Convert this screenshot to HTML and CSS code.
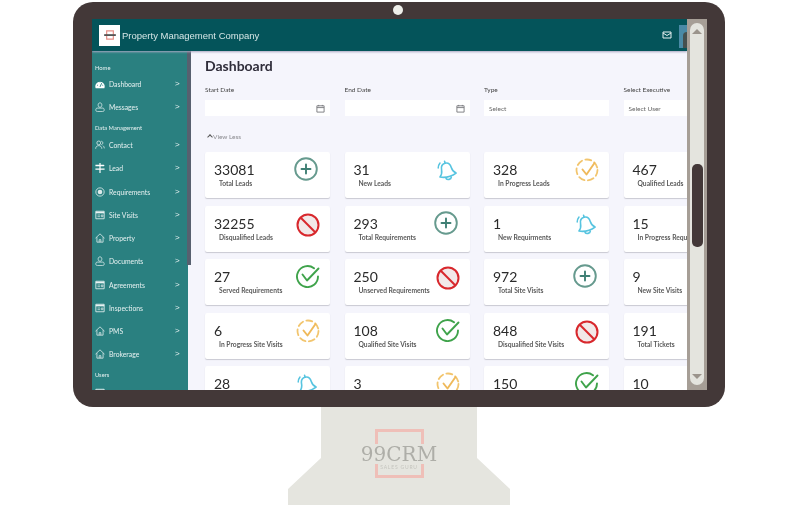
FILE: index.html
```html
<!DOCTYPE html>
<html lang="en">
<head>
  <meta charset="UTF-8" />
  <title>Property Management Dashboard</title>
  <link rel="stylesheet" href="styles.css">
</head>
<body>

  <!-- Icon sprites -->
  <svg class="sprites" width="0" height="0">
    <symbol id="i-plus" viewBox="0 0 24 24">
      <circle cx="12" cy="12" r="10.8" fill="none" stroke="#669a8e" stroke-width="1.9"/>
      <path d="M12 7.500v9M7.500 12h9" stroke="#3f7f74" stroke-width="1.9" stroke-linecap="round"/>
    </symbol>
    <symbol id="i-bell" viewBox="0 0 24 24">
      <g transform="rotate(-14 12 12)" fill="none" stroke="#57c4e0" stroke-width="1.600" stroke-linecap="round" stroke-linejoin="round">
        <path d="M12 4c3.300 0 4.800 2.600 5 5.600.2 3 1.300 5 3.300 6.600-4.800 2-11.800 2-16.600 0 2-1.600 3.100-3.600 3.300-6.600.2-3 1.700-5.600 5-5.600z"/>
        <path d="M9.300 19c.8 2.200 4.600 2.200 5.400 0M12 2v2"/>
      </g>
      <path d="M5 4C3.800 5.500 3.200 7 3.200 9" fill="none" stroke="#57c4e0" stroke-width="1.500" stroke-linecap="round"/>
    </symbol>
    <symbol id="i-prog" viewBox="0 0 24 24">
      <circle cx="12" cy="12" r="10.500" fill="none" stroke="#f2c56e" stroke-width="1.800" stroke-dasharray="6 3.500" stroke-linecap="round"/>
      <path d="M7.500 11.500l4 5 8-11.500" fill="none" stroke="#efb95a" stroke-width="1.900" stroke-linecap="round" stroke-linejoin="round"/>
    </symbol>
    <symbol id="i-check" viewBox="0 0 24 24">
      <path d="M18 4.300a10.500 10.500 0 1 0 4 8.200" fill="none" stroke="#3fa34b" stroke-width="1.900" stroke-linecap="round"/>
      <path d="M6.500 10.500l4.500 6L22.500 4.500" fill="none" stroke="#3fa34b" stroke-width="1.900" stroke-linecap="round" stroke-linejoin="round"/>
    </symbol>
    <symbol id="i-ban" viewBox="0 0 24 24">
      <circle cx="12" cy="12" r="10.500" fill="#f2e9e9" stroke="#d8282d" stroke-width="2"/>
      <path d="M4.800 4.800l14.400 14.400" stroke="#d8282d" stroke-width="2"/>
    </symbol>
    <symbol id="i-cal" viewBox="0 0 10 10">
      <path d="M1 2h8v7H1zM1 4h8M3 1v1.500M7 1v1.500" fill="none" stroke="#77787c" stroke-width="1"/>
    </symbol>
    <symbol id="i-gauge" viewBox="0 0 12 12">
      <path d="M.8 11a5.600 5.600 0 1 1 10.400 0z" fill="#fff"/>
      <path d="M6 9.500l2-4.500M2.500 7.500h1M8.800 7.500h1M6 3v1" stroke="#2a8080" stroke-width="1.100"/>
    </symbol>
    <symbol id="i-user" viewBox="0 0 12 12">
      <path d="M3.800 3.300c0-3 4.400-3 4.400 0v.7c0 3-4.400 3-4.400 0z" fill="none" stroke="#e8f2f2" stroke-width=".9"/>
      <path d="M3 7.300h6c1.300 0 2 .7 2 1.900v.3c0 1.300-.7 2-2 2H3c-1.300 0-2-.7-2-2v-.3c0-1.200.7-1.900 2-1.900z" fill="none" stroke="#e8f2f2" stroke-width=".9"/>
    </symbol>
    <symbol id="i-people" viewBox="0 0 12 12">
      <circle cx="4.500" cy="3.500" r="2.300" fill="none" stroke="#e8f2f2" stroke-width=".9"/>
      <path d="M.8 10.500c0-5 7.400-5 7.400 0M7.500 1.500c2.500 0 2.500 4 0 4M9.500 6.800c1 .6 1.700 1.800 1.700 3.200" fill="none" stroke="#e8f2f2" stroke-width=".9"/>
    </symbol>
    <symbol id="i-sign" viewBox="0 0 12 12">
      <path d="M5.300 0h1.400v12H5.300z M.5 2h10l1 1-1 1H.5z M.5 6.500h11V8H.5z" fill="#fff"/>
    </symbol>
    <symbol id="i-target" viewBox="0 0 12 12">
      <circle cx="6" cy="6" r="5" fill="none" stroke="#dbe9e9" stroke-width="1"/>
      <circle cx="6" cy="6" r="2.800" fill="#dbe9e9"/>
    </symbol>
    <symbol id="i-box" viewBox="0 0 12 12">
      <path d="M1 1.500h10v9H1z" fill="none" stroke="#e8f2f2" stroke-width="1"/>
      <path d="M1 2h10v2H1z" fill="#e8f2f2"/>
      <path d="M3 6h3M3 8h3M7.500 6h2v2h-2z" stroke="#e8f2f2" stroke-width=".8" fill="none"/>
    </symbol>
    <symbol id="i-home" viewBox="0 0 12 12">
      <path d="M.6 6.200L6 1l5.400 5.200M2.300 5v6h7.400V5M5 11V8h2v3" fill="none" stroke="#e8f2f2" stroke-width=".9" stroke-linejoin="round"/>
    </symbol>
  </svg>

  <!-- Monitor -->
  <div class="monitor">
    <span class="camera"></span>
    <div class="screen">
      <div class="app">
        <header class="topbar">
          <div class="logo">
            <svg class="logo-mark" viewBox="0 0 14 12">
              <path d="M3 1h8v10H3z" fill="none" stroke="#e58d85" stroke-width="1.400"/>
              <path d="M0 5h14v2.200H0z" fill="#555"/>
            </svg>
          </div>
          <div class="company">Property Management Company</div>
          <svg class="mail" viewBox="0 0 10 10"><path d="M1 2h8v6H1zM1 3l4 2.500L9 3" fill="none" stroke="#e6f0f0" stroke-width="1"/></svg>
          <div class="avatar"><span class="avatar-head"></span></div>
        </header>

        <div class="body-row">
          <!-- Sidebar -->
          <nav class="sidebar">
            <div class="nav-title nav-title-first">Home</div>
            <div class="nav-item"><svg class="nav-icon"><use href="#i-gauge"/></svg><span>Dashboard</span><b>&gt;</b></div>
            <div class="nav-item"><svg class="nav-icon"><use href="#i-user"/></svg><span>Messages</span><b>&gt;</b></div>
            <div class="nav-title">Data Management</div>
            <div class="nav-item"><svg class="nav-icon"><use href="#i-people"/></svg><span>Contact</span><b>&gt;</b></div>
            <div class="nav-item"><svg class="nav-icon"><use href="#i-sign"/></svg><span>Lead</span><b>&gt;</b></div>
            <div class="nav-item"><svg class="nav-icon"><use href="#i-target"/></svg><span>Requirements</span><b>&gt;</b></div>
            <div class="nav-item"><svg class="nav-icon"><use href="#i-box"/></svg><span>Site Visits</span><b>&gt;</b></div>
            <div class="nav-item"><svg class="nav-icon"><use href="#i-home"/></svg><span>Property</span><b>&gt;</b></div>
            <div class="nav-item"><svg class="nav-icon"><use href="#i-user"/></svg><span>Documents</span><b>&gt;</b></div>
            <div class="nav-item"><svg class="nav-icon"><use href="#i-box"/></svg><span>Agreements</span><b>&gt;</b></div>
            <div class="nav-item"><svg class="nav-icon"><use href="#i-box"/></svg><span>Inspections</span><b>&gt;</b></div>
            <div class="nav-item"><svg class="nav-icon"><use href="#i-home"/></svg><span>PMS</span><b>&gt;</b></div>
            <div class="nav-item"><svg class="nav-icon"><use href="#i-home"/></svg><span>Brokerage</span><b>&gt;</b></div>
            <div class="nav-title">Users</div>
            <div class="nav-item"><svg class="nav-icon"><use href="#i-box"/></svg><span>Buyer/Tenant</span><b>&gt;</b></div>
          </nav>
          <div class="side-scroll"></div>

          <!-- Main content -->
          <main class="content">
            <h1>Dashboard</h1>
            <div class="filters">
              <div class="filter">
                <label>Start Date</label>
                <div class="field"><svg class="cal"><use href="#i-cal"/></svg></div>
              </div>
              <div class="filter">
                <label>End Date</label>
                <div class="field"><svg class="cal"><use href="#i-cal"/></svg></div>
              </div>
              <div class="filter">
                <label>Type</label>
                <div class="field">Select</div>
              </div>
              <div class="filter">
                <label>Select Executive</label>
                <div class="field">Select User</div>
              </div>
            </div>
            <div class="view-less"><span class="caret"></span>View Less</div>

            <div class="cards">
              <div class="card"><div><div class="num">33081</div><div class="lbl">Total Leads</div></div><svg class="ic ic-plus"><use href="#i-plus"/></svg></div>
              <div class="card"><div><div class="num">31</div><div class="lbl">New Leads</div></div><svg class="ic ic-bell"><use href="#i-bell"/></svg></div>
              <div class="card"><div><div class="num">328</div><div class="lbl">In Progress Leads</div></div><svg class="ic"><use href="#i-prog"/></svg></div>
              <div class="card"><div><div class="num">467</div><div class="lbl">Qualified Leads</div></div><svg class="ic ic-check"><use href="#i-check"/></svg></div>

              <div class="card"><div><div class="num">32255</div><div class="lbl">Disqualified Leads</div></div><svg class="ic ic-ban"><use href="#i-ban"/></svg></div>
              <div class="card"><div><div class="num">293</div><div class="lbl">Total Requirements</div></div><svg class="ic ic-plus"><use href="#i-plus"/></svg></div>
              <div class="card"><div><div class="num">1</div><div class="lbl">New Requirments</div></div><svg class="ic ic-bell"><use href="#i-bell"/></svg></div>
              <div class="card"><div><div class="num">15</div><div class="lbl">In Progress Requirements</div></div><svg class="ic"><use href="#i-prog"/></svg></div>

              <div class="card"><div><div class="num">27</div><div class="lbl">Served Requirements</div></div><svg class="ic ic-check"><use href="#i-check"/></svg></div>
              <div class="card"><div><div class="num">250</div><div class="lbl">Unserved Requirements</div></div><svg class="ic ic-ban"><use href="#i-ban"/></svg></div>
              <div class="card"><div><div class="num">972</div><div class="lbl">Total Site Visits</div></div><svg class="ic ic-plus"><use href="#i-plus"/></svg></div>
              <div class="card"><div><div class="num">9</div><div class="lbl">New Site Visits</div></div><svg class="ic ic-bell"><use href="#i-bell"/></svg></div>

              <div class="card"><div><div class="num">6</div><div class="lbl">In Progress Site Visits</div></div><svg class="ic"><use href="#i-prog"/></svg></div>
              <div class="card"><div><div class="num">108</div><div class="lbl">Qualified Site Visits</div></div><svg class="ic ic-check"><use href="#i-check"/></svg></div>
              <div class="card"><div><div class="num">848</div><div class="lbl">Disqualified Site Visits</div></div><svg class="ic ic-ban"><use href="#i-ban"/></svg></div>
              <div class="card"><div><div class="num">191</div><div class="lbl">Total Tickets</div></div><svg class="ic ic-plus"><use href="#i-plus"/></svg></div>

              <div class="card"><div><div class="num">28</div></div><svg class="ic ic-bell"><use href="#i-bell"/></svg></div>
              <div class="card"><div><div class="num">3</div></div><svg class="ic"><use href="#i-prog"/></svg></div>
              <div class="card"><div><div class="num">150</div></div><svg class="ic ic-check"><use href="#i-check"/></svg></div>
              <div class="card"><div><div class="num">10</div></div><svg class="ic ic-ban"><use href="#i-ban"/></svg></div>
            </div>
          </main>
        </div>
      </div>

      <!-- Page scrollbar -->
      <div class="scrollbar">
        <div class="track">
          <span class="arrow arrow-up"></span>
          <span class="thumb"></span>
          <span class="arrow arrow-down"></span>
        </div>
      </div>
    </div>
  </div>

  <!-- Stand with watermark -->
  <div class="stand">
    <div class="mark">
      <div class="mark-name">99CRM</div>
      <div class="mark-sub">SALES GURU</div>
    </div>
  </div>

</body>
</html>
```

FILE: styles.css
```css
/* Global reset */
* {
  margin: 0;
  padding: 0;
  box-sizing: border-box;
}

body {
  background: #fff;
  font-family: "Lato", "Open Sans", sans-serif;
  color: #333;
  overflow: hidden;
}

.sprites {
  display: block;
  height: 0;
}

/* Monitor frame */
.monitor {
  position: relative;
  width: 652px;
  height: 405px;
  margin: 2px 0 0 73px;
  padding: 17px 19px 16px 19px;
  background: #433838;
  border-radius: 20px;
}

.camera {
  position: absolute;
  top: 3px;
  left: 320px;
  width: 10px;
  height: 10px;
  border-radius: 50%;
  background: #efefea;
}

.screen {
  display: flex;
  width: 615px;
  height: 371px;
  overflow: hidden;
  filter: blur(0.45px);
}

.app {
  display: flex;
  flex-direction: column;
  width: 595px;
  height: 371px;
  overflow: hidden;
  background: #f5f5fc;
}

/* Top bar */
.topbar {
  display: flex;
  align-items: center;
  flex: none;
  height: 32px;
  padding: 0 0 0 7px;
  background: #04545a;
  box-shadow: 0 1px 2px #a9a6c0;
  position: relative;
}

.logo {
  display: flex;
  align-items: center;
  justify-content: center;
  width: 21px;
  height: 21px;
  background: #fff;
}

.logo-mark {
  width: 12px;
  height: 10px;
}

.company {
  margin-left: 2px;
  font-family: "Liberation Sans", sans-serif;
  font-size: 9.5px;
  color: #d5e6e6;
}

.mail {
  width: 10px;
  height: 10px;
  margin-left: auto;
  margin-right: 7px;
}

.avatar {
  display: flex;
  justify-content: center;
  align-items: flex-end;
  width: 8px;
  height: 23px;
  margin-top: 3px;
  background: #4a8aa6;
  overflow: hidden;
}

.avatar-head {
  width: 8px;
  height: 16px;
  margin-left: 4px;
  background: #45504f;
  border-radius: 4px 0 0 0;
}

.body-row {
  display: flex;
  flex: 1;
  min-height: 0;
}

/* Sidebar */
.sidebar {
  flex: none;
  width: 96px;
  height: 339px;
  padding-left: 3px;
  background: #2a8080;
  color: #e6f0f0;
  overflow: hidden;
}

.side-scroll {
  flex: none;
  width: 4px;
  height: 214px;
  background: #57606f;
  margin-left: -1px;
}

.nav-title {
  height: 12px;
  margin-top: 3px;
  font-size: 5.8px;
  line-height: 12px;
}

.nav-title-first {
  height: 10.5px;
  margin-top: 10.5px;
}

.nav-item {
  display: flex;
  align-items: center;
  height: 23.25px;
  font-size: 6.8px;
  white-space: nowrap;
}

.nav-icon {
  flex: none;
  width: 10px;
  height: 10px;
  margin-right: 4px;
}

.nav-item span {
  flex: 1;
}

.nav-item b {
  width: 13px;
  font-family: "Liberation Sans", sans-serif;
  font-size: 8px;
  font-weight: 400;
  line-height: 10px;
}

/* Main content */
.content {
  flex: none;
  width: 496px;
  padding: 6px 0 0 14px;
  overflow: hidden;
}

h1 {
  height: 17px;
  font-size: 14px;
  font-weight: 700;
  line-height: 17px;
  color: #2f2d3a;
}

.filters {
  display: grid;
  grid-template-columns: repeat(4, 125px);
  column-gap: 14.5px;
  margin-top: 10px;
}

.filter label {
  display: block;
  height: 16px;
  font-size: 6.5px;
  line-height: 12px;
  color: #444;
}

.field {
  display: flex;
  align-items: center;
  justify-content: flex-end;
  height: 16px;
  padding: 0 5px;
  background: #fff;
  font-size: 6.5px;
  color: #666;
}

.filter:nth-child(n+3) .field {
  justify-content: flex-start;
}

.cal {
  width: 9px;
  height: 9px;
}

.view-less {
  display: flex;
  align-items: center;
  height: 12px;
  margin: 14px 0 10px 2px;
  font-size: 6.5px;
  color: #8a8a8f;
}

.caret {
  width: 4px;
  height: 4px;
  margin: 1px 1px 0 1px;
  border-left: 1px solid #555;
  border-top: 1px solid #555;
  transform: rotate(45deg);
}

/* Stat cards */
.cards {
  display: grid;
  grid-template-columns: repeat(4, 125px);
  grid-auto-rows: 46px;
  gap: 7.5px 14.5px;
}

.card {
  display: flex;
  justify-content: space-between;
  padding: 10px 10px 0 9px;
  background: #fff;
  border-radius: 2px;
  box-shadow: 0 1px 1px #c9c9d2;
}

.num {
  font-size: 14px;
  line-height: 15px;
  color: #2a2a2a;
}

.lbl {
  margin: 2px 0 0 5px;
  font-size: 6.7px;
  font-weight: 700;
  line-height: 9px;
  white-space: nowrap;
  color: #5a5a5a;
}

.ic {
  flex: none;
  width: 24px;
  height: 24px;
  margin: -4px 0 0 0;
}

.ic-plus {
  margin: -5px 2px 0 0;
}

.ic-bell {
  margin: -3px 1px 0 0;
}

.ic-ban {
  margin: -3px 0 0 0;
}

.ic-check {
  margin: -5px 0 0 0;
}

/* Page scrollbar */
.scrollbar {
  flex: none;
  width: 20px;
  height: 371px;
  padding: 4px 3px 5px 3px;
  background: #a69e96;
}

.track {
  display: flex;
  flex-direction: column;
  align-items: center;
  height: 100%;
  padding: 6px 0;
  background: #e4e4de;
  border-radius: 7px;
}

.arrow {
  width: 0;
  height: 0;
  border-left: 5px solid transparent;
  border-right: 5px solid transparent;
}

.arrow-up {
  border-bottom: 5px solid #9b948c;
}

.arrow-down {
  border-top: 5px solid #9b948c;
}

.thumb {
  width: 11px;
  height: 83px;
  margin: 130px 0 auto 0;
  background: #433838;
  border-radius: 5px;
}

/* Stand */
.stand {
  display: flex;
  justify-content: center;
  width: 222px;
  height: 98px;
  margin-left: 288px;
  padding-top: 22px;
  background: #e5e5df;
  clip-path: polygon(33px 0, 189px 0, 189px 51px, 222px 82px, 222px 98px, 0 98px, 0 82px, 33px 51px);
}

.mark {
  display: flex;
  flex-direction: column;
  align-items: center;
  justify-content: center;
  width: 49px;
  height: 49px;
  border: 3px solid #efbfb8;
  filter: blur(0.4px);
}

.mark-name {
  padding: 0 2px;
  margin-top: 7px;
  background: #e5e5df;
  font-family: "DejaVu Serif", serif;
  font-size: 20px;
  line-height: 20px;
  color: #aeaea8;
  white-space: nowrap;
}

.mark-sub {
  padding: 0 1px;
  background: #e5e5df;
  font-size: 5px;
  line-height: 7px;
  letter-spacing: 0.8px;
  color: #c4c4be;
  white-space: nowrap;
}
```
